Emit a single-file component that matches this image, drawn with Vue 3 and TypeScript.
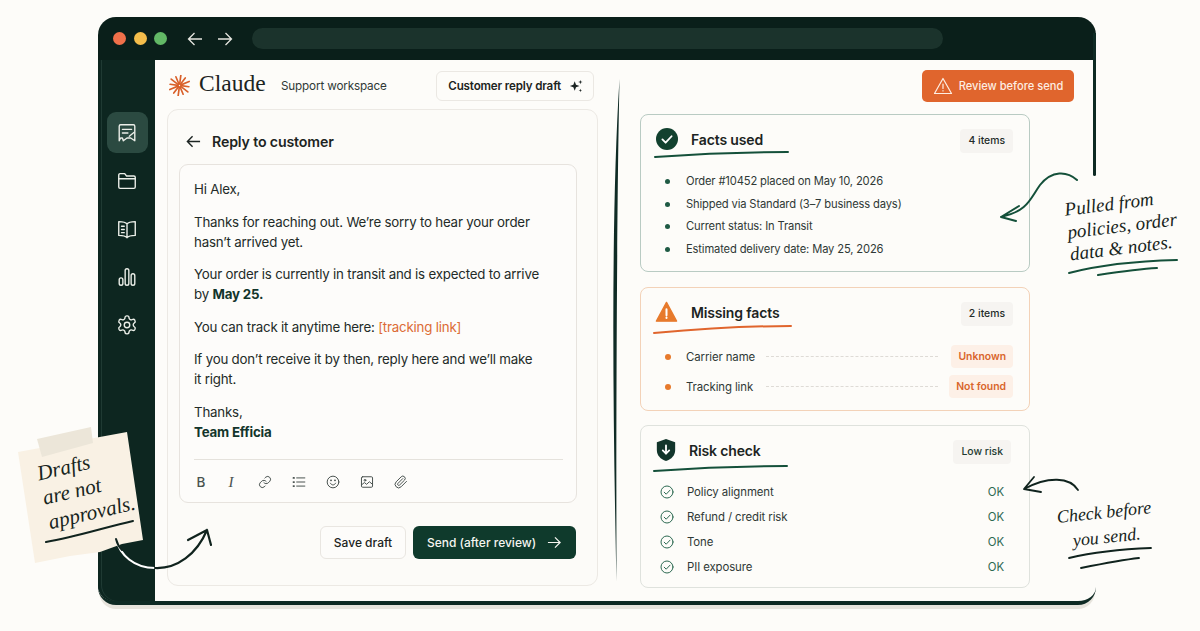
<script setup lang="ts">
const rays = Array.from({ length: 12 }, (_, i) => {
  const a = (i * Math.PI) / 6 + 0.13
  const r = i % 2 ? 10 : 9
  return {
    x1: 10 + Math.cos(a) * 1.5,
    y1: 10 + Math.sin(a) * 1.5,
    x2: 10 + Math.cos(a) * r,
    y2: 10 + Math.sin(a) * r,
  }
})

const facts = [
  'Order #10452 placed on May 10, 2026',
  'Shipped via Standard (3–7 business days)',
  'Current status: In Transit',
  'Estimated delivery date: May 25, 2026',
]

const missing = [
  { label: 'Carrier name', status: 'Unknown' },
  { label: 'Tracking link', status: 'Not found' },
]

const risks = ['Policy alignment', 'Refund / credit risk', 'Tone', 'PII exposure']
</script>

<template>
  <div class="stage">
    <div class="window">
      <header class="titlebar">
        <span class="dot red"></span>
        <span class="dot yellow"></span>
        <span class="dot green"></span>
        <svg class="nav-arrow first" viewBox="0 0 16 16"><path d="M15 8H1.5M7.5 2L1.5 8l6 6" /></svg>
        <svg class="nav-arrow" viewBox="0 0 16 16"><path d="M1 8h13.5M8.5 2l6 6-6 6" /></svg>
        <div class="urlbar"></div>
      </header>

      <div class="body">
        <nav class="sidebar">
          <div class="side-btn active">
            <svg viewBox="0 0 24 24">
              <path d="M3.5 4.5A1.5 1.5 0 0 1 5 3h14a1.5 1.5 0 0 1 1.5 1.5v16l-4.5-3h-4l-4 3-1-3H5l-1.5 3z" />
              <path d="M7 8h10M7 12h6M14.5 15.5l5-4" />
            </svg>
          </div>
          <div class="side-btn">
            <svg viewBox="0 0 24 24">
              <path d="M3 7V5.5A1.5 1.5 0 0 1 4.5 4h5l2 2.5h8A1.5 1.5 0 0 1 21 8v10.5a1.5 1.5 0 0 1-1.5 1.5h-15A1.5 1.5 0 0 1 3 18.5z" />
              <path d="M3 9.5h18" />
            </svg>
          </div>
          <div class="side-btn">
            <svg viewBox="0 0 24 24">
              <path d="M12 6.5C10.5 4.5 7 4 3 4v15c4 0 7.5.5 9 2.5 1.5-2 5-2.5 9-2.5V4c-4 0-7.5.5-9 2.5zM12 6.5v15" />
              <path d="M6 9h3M6 12.5h3M6 16h3" />
            </svg>
          </div>
          <div class="side-btn">
            <svg viewBox="0 0 24 24">
              <rect x="3.5" y="13" width="4" height="8" rx="2" />
              <rect x="10" y="3" width="4" height="18" rx="2" />
              <rect x="16.5" y="8.5" width="4" height="12.5" rx="2" />
            </svg>
          </div>
          <div class="side-btn">
            <svg viewBox="0 0 24 24">
              <circle cx="12" cy="12" r="3" />
              <path d="M12.2 2h-.4a2 2 0 0 0-2 2v.2a2 2 0 0 1-1 1.7l-.4.2a2 2 0 0 1-2 0l-.2-.1a2 2 0 0 0-2.7.7l-.2.4a2 2 0 0 0 .7 2.7l.2.1a2 2 0 0 1 1 1.7v.5a2 2 0 0 1-1 1.7l-.2.1a2 2 0 0 0-.7 2.7l.2.4a2 2 0 0 0 2.7.7l.2-.1a2 2 0 0 1 2 0l.4.2a2 2 0 0 1 1 1.7v.2a2 2 0 0 0 2 2h.4a2 2 0 0 0 2-2v-.2a2 2 0 0 1 1-1.7l.4-.2a2 2 0 0 1 2 0l.2.1a2 2 0 0 0 2.7-.7l.2-.4a2 2 0 0 0-.7-2.7l-.2-.1a2 2 0 0 1-1-1.7v-.5a2 2 0 0 1 1-1.7l.2-.1a2 2 0 0 0 .7-2.7l-.2-.4a2 2 0 0 0-2.7-.7l-.2.1a2 2 0 0 1-2 0l-.4-.2a2 2 0 0 1-1-1.7V4a2 2 0 0 0-2-2z" />
            </svg>
          </div>
        </nav>

        <main class="left">
          <div class="brandbar">
            <svg class="logo" viewBox="0 0 20 20">
              <line v-for="(r, i) in rays" :key="i" :x1="r.x1" :y1="r.y1" :x2="r.x2" :y2="r.y2" />
            </svg>
            <span class="brand">Claude</span>
            <span class="workspace">Support workspace</span>
            <div class="chip">
              Customer reply draft
              <svg class="spark" viewBox="0 0 16 16">
                <path d="M6.5 2.5l1.5 4 4 1.5-4 1.5-1.5 4-1.5-4-4-1.5 4-1.5zM13 1l.6 1.9 1.9.6-1.9.6L13 6l-.6-1.9-1.9-.6 1.9-.6zM13 11l.5 1.5 1.5.5-1.5.5-.5 1.500-.5-1.500L11 13l1.500-.5z" />
              </svg>
            </div>
          </div>

          <section class="reply">
            <h2 class="reply-title">
              <svg class="back" viewBox="0 0 16 16"><path d="M15 8H1.5M7 2.5L1.5 8 7 13.5" /></svg>
              Reply to customer
            </h2>

            <div class="editor">
              <div class="message">
                <p>Hi Alex,</p>
                <p>Thanks for reaching out. We’re sorry to hear your order<br />hasn’t arrived yet.</p>
                <p>Your order is currently in transit and is expected to arrive<br />by <strong>May 25.</strong></p>
                <p>You can track it anytime here: <span class="link">[tracking link]</span></p>
                <p>If you don’t receive it by then, reply here and we’ll make<br />it right.</p>
                <p>Thanks,<br /><strong>Team Efficia</strong></p>
              </div>
              <div class="toolbar">
                <span class="tool bold">B</span>
                <span class="tool italic">I</span>
                <svg class="tool" viewBox="0 0 24 24">
                  <path d="M10 13a5 5 0 0 0 7.5.5l3-3a5 5 0 0 0-7-7l-1.7 1.7" />
                  <path d="M14 11a5 5 0 0 0-7.5-.5l-3 3a5 5 0 0 0 7 7l1.7-1.7" />
                </svg>
                <svg class="tool" viewBox="0 0 24 24">
                  <path d="M8 5h14M8 12h14M8 19h14" />
                  <path class="thick" d="M2.5 5h1M2.5 12h1M2.5 19h1" />
                </svg>
                <svg class="tool" viewBox="0 0 24 24">
                  <circle cx="12" cy="12" r="10" />
                  <path d="M7.5 14c1.2 2 2.7 3 4.5 3s3.3-1 4.5-3" />
                  <path class="thick" d="M8.5 9h.2M15.3 9h.2" />
                </svg>
                <svg class="tool" viewBox="0 0 24 24">
                  <rect x="2.5" y="3" width="19" height="18" rx="2" />
                  <circle cx="8.5" cy="9" r="1.5" />
                  <path d="M2.5 17l5-4 4 3 4.5-4.5 5.5 4.5" />
                </svg>
                <svg class="tool" viewBox="0 0 24 24">
                  <path d="M21.4 11l-9.2 9.2a6 6 0 0 1-8.500-8.500l8.600-8.600A4 4 0 1 1 18 8.800l-8.600 8.600a2 2 0 0 1-2.800-2.800l8.500-8.500" />
                </svg>
              </div>
            </div>

            <div class="actions">
              <button class="btn-ghost">Save draft</button>
              <button class="btn-send">
                Send (after review)
                <svg viewBox="0 0 16 16"><path d="M1 8h13M8.5 2.5L14 8l-5.5 5.5" /></svg>
              </button>
            </div>
          </section>
        </main>

        <aside class="right">
          <button class="btn-review">
            <svg viewBox="0 0 20 20">
              <path d="M10 2.5l8.5 15h-17z" />
              <path d="M10 8v4.5M10 14.5v.5" />
            </svg>
            Review before send
          </button>

          <section class="card facts">
            <div class="card-head">
              <svg class="head-icon" viewBox="0 0 24 24">
                <circle cx="12" cy="12" r="12" fill="#12412f" />
                <path d="M7 12.5l3.5 3.5L17 9" fill="none" stroke="#fff" stroke-width="2" stroke-linecap="round" stroke-linejoin="round" />
              </svg>
              <h3>Facts used</h3>
              <span class="pill">4 items</span>
            </div>
            <ul class="facts-list">
              <li v-for="fact in facts" :key="fact">{{ fact }}</li>
            </ul>
          </section>

          <section class="card missing">
            <div class="card-head">
              <svg class="head-icon warn" viewBox="0 0 24 24">
                <path d="M12 1.5L23 22H1z" fill="#e77a2c" stroke="#e77a2c" stroke-width="1.5" stroke-linejoin="round" />
                <path d="M12 9v6.5M12 18v.6" fill="none" stroke="#fff" stroke-width="2.2" stroke-linecap="round" />
              </svg>
              <h3>Missing facts</h3>
              <span class="pill">2 items</span>
            </div>
            <div class="missing-list">
              <div v-for="item in missing" :key="item.label" class="missing-row">
                <span class="orange-dot"></span>
                <span class="missing-label">{{ item.label }}</span>
                <span class="dashes"></span>
                <span class="tag">{{ item.status }}</span>
              </div>
            </div>
          </section>

          <section class="card risk">
            <div class="card-head">
              <svg class="head-icon shield" viewBox="0 0 24 24">
                <path d="M12 0l10 3.5V12c0 6-4 10-10 12C6 22 2 18 2 12V3.5z" fill="#12352b" />
                <path d="M12 7v9M8.5 12.5L12 16l3.5-3.5" fill="none" stroke="#fff" stroke-width="2" stroke-linecap="round" stroke-linejoin="round" />
              </svg>
              <h3>Risk check</h3>
              <span class="pill dark">Low risk</span>
            </div>
            <div class="risk-list">
              <div v-for="risk in risks" :key="risk" class="risk-row">
                <svg viewBox="0 0 14 14">
                  <circle cx="7" cy="7" r="6" />
                  <path d="M4.2 7.2l2 2 3.8-4" />
                </svg>
                <span class="risk-label">{{ risk }}</span>
                <span class="ok">OK</span>
              </div>
            </div>
          </section>
        </aside>
      </div>
      <div class="frame-edge"></div>
    </div>

    <!-- hand drawn marks over the window -->
    <svg class="marks" viewBox="0 0 1200 631">
      <path d="M619.5 79C617 200 616 400 616.5 582C613 420 610.5 220 619.5 79z" fill="#0f2b25" />

      <polygon points="18,452 127,432 143,540 122,544 100,552 70,556 35,563" fill="#f9f1e4" />
      <polygon points="37,439 91,427 93,443 42,457" fill="#ece6d9" />
      <path class="ink" d="M46 542c30-5 60-15 87-21" stroke-width="2" />

      <path d="M116 539c4 16 18 29 39 29" fill="none" stroke="#fff" stroke-width="2.2" stroke-linecap="round" />
      <path class="ink" d="M116 539c1 4 3 8 6 11" stroke-width="2" />
      <path class="ink" d="M155 568c22 1 42-14 52-38M188 540l19-10 4 15" stroke-width="2.2" />

      <path class="green-ink" d="M1077 180c-10-9-25-10-37 5-10 14-12 26-39 32M1019 206l-18 11 15 4" />
      <path class="ink" d="M1078 490c-8-13-30-14-54-1M1034 477l-10 12 17 3" stroke-width="1.8" />

      <path class="green-fill" d="M655 157c40-3 90-5 133-5" />
      <path class="orange-fill" d="M654 333c45-4 95-7 137-7" />
      <path class="green-fill" d="M654 471c40-3 90-5 133-5" />

      <path class="green-fill" d="M1069 273c30-8 70-12 108-13M1098 275c20-3 40-6 59-7" />
      <path class="ink" d="M1069 558c25-6 55-9 82-10M1081 568c20-4 40-8 58-10" stroke-width="1.8" />
    </svg>

    <div class="hand note-text">Drafts<br />are not<br />approvals.</div>
    <div class="hand pulled-text">Pulled from<br />policies, order<br />data &amp; notes.</div>
    <div class="hand check-text">Check before<br />you send.</div>
  </div>
</template>

<style scoped>
.stage {
  position: relative;
  width: 1200px;
  height: 631px;
  padding: 17px 104px 26px 98px;
  box-sizing: border-box;
  overflow: hidden;
  background: #fdfcf9;
  color: #1f2a27;
  font-family: Inter, "Liberation Sans", sans-serif;
}

.window {
  position: relative;
  display: flex;
  flex-direction: column;
  height: 100%;
  box-sizing: border-box;
  background: #fdfcf9;
  border-bottom: 4px solid #0e2a24;
  border-radius: 18px;
  box-shadow: 0 5px 0 -1px #e7e4dd;
}

.titlebar {
  display: flex;
  align-items: center;
  height: 43px;
  flex: none;
  padding-left: 15px;
  background: #0a1f1a;
  border-radius: 18px 18px 0 0;
}

.dot {
  width: 13px;
  height: 13px;
  border-radius: 50%;
  margin-right: 7.5px;
}
.red { background: #f0704a; }
.yellow { background: #f4bd4b; }
.green { background: #62b866; }

.nav-arrow {
  width: 16px;
  height: 16px;
  margin-left: 14px;
  fill: none;
  stroke: #e6e6e0;
  stroke-width: 1.3;
}
.nav-arrow.first { margin-left: 12px; }

.urlbar {
  width: 691px;
  height: 21px;
  margin-left: 19px;
  border-radius: 11px;
  background: #1b332c;
}

.body {
  display: flex;
  flex: 1;
  min-height: 0;
}

.sidebar {
  display: flex;
  flex-direction: column;
  align-items: center;
  gap: 7px;
  flex: none;
  width: 57px;
  box-sizing: border-box;
  padding: 52px 0 0 1px;
  background: #0d2620;
  border-radius: 0 0 0 16px;
  box-shadow: inset 3px 0 0 #0d2620, inset 4px 0 0 #1f3a33;
}

.side-btn {
  display: flex;
  align-items: center;
  justify-content: center;
  width: 41px;
  height: 41px;
  border-radius: 9px;
}
.side-btn.active { background: #2b4a41; }
.side-btn svg {
  width: 22px;
  height: 22px;
  fill: none;
  stroke: #ecefe9;
  stroke-width: 1.5;
  stroke-linejoin: round;
  stroke-linecap: round;
}

.left {
  flex: none;
  width: 462px;
  box-sizing: border-box;
  padding: 11px 0 0 12px;
}

.brandbar {
  display: flex;
  align-items: center;
  width: 431px;
  height: 30px;
}

.logo {
  width: 21px;
  height: 21px;
  margin-left: 2px;
  margin-bottom: 2px;
  stroke: #d9602a;
  stroke-width: 1.6;
  stroke-linecap: round;
}

.brand {
  width: 82px;
  margin-left: 9px;
  margin-bottom: 5px;
  font-family: "Liberation Serif", serif;
  font-size: 23.5px;
  color: #1c2422;
}

.workspace {
  font-size: 11.7px;
  letter-spacing: -0.15px;
  color: #2f3936;
}

.chip {
  display: flex;
  align-items: center;
  gap: 8px;
  margin-left: auto;
  margin-right: 4px;
  height: 30px;
  padding: 0 10px 0 11px;
  box-sizing: border-box;
  border: 1px solid #ebe8e3;
  border-radius: 6px;
  font-size: 11.6px;
  letter-spacing: -0.15px;
  font-weight: 600;
  color: #1c2422;
}

.spark {
  width: 14px;
  height: 14px;
  fill: #1c2422;
}

.reply {
  height: 477px;
  margin-top: 8px;
  padding: 0 20px 0 11px;
  box-sizing: border-box;
  width: 431px;
  border: 1px solid #ece9e4;
  border-radius: 11px;
  background: #fcfbf8;
}

.reply-title {
  display: flex;
  align-items: center;
  gap: 11px;
  height: 54px;
  box-sizing: border-box;
  margin: 0;
  padding: 8px 0 0 7px;
  font-size: 14.2px;
  letter-spacing: -0.15px;
  font-weight: 600;
  color: #1c2422;
}

.back {
  width: 15px;
  height: 15px;
  fill: none;
  stroke: #1c2422;
  stroke-width: 1.5;
}

.editor {
  height: 339px;
  box-sizing: border-box;
  padding: 14px 13px 0 14px;
  border: 1px solid #e7e3de;
  border-radius: 9px;
  background: #fdfcfa;
}

.message {
  height: 280px;
  font-size: 13.3px;
  letter-spacing: -0.2px;
  line-height: 20px;
  color: #232b28;
}
.message p { margin: 0 0 12.5px; }
.message strong { font-weight: 700; color: #12352b; }
.link { color: #dc6b35; }

.toolbar {
  display: flex;
  align-items: center;
  gap: 20px;
  height: 44px;
  border-top: 1px solid #e5e2dc;
}

.tool {
  width: 14px;
  height: 14px;
  flex: none;
  fill: none;
  stroke: #49524f;
  stroke-width: 1.7;
  stroke-linecap: round;
  stroke-linejoin: round;
  font-size: 13.5px;
  line-height: 14px;
  text-align: center;
  color: #49524f;
}
.tool .thick { stroke-width: 3; }
.bold { font-weight: 500; margin-right: -4px; }
.italic { font-family: "Liberation Serif", serif; font-style: italic; font-size: 15px; }

.actions {
  display: flex;
  justify-content: flex-end;
  gap: 7px;
  margin-top: 23px;
  padding-right: 1px;
}

button {
  font-family: inherit;
  font-size: 12px;
  font-weight: 500;
}

.btn-ghost {
  width: 86px;
  height: 33px;
  border: 1px solid #e9e6e1;
  border-radius: 6px;
  background: #fdfcfa;
  color: #1c2422;
}

.btn-send {
  display: flex;
  align-items: center;
  justify-content: center;
  gap: 11px;
  width: 163px;
  height: 33px;
  border: none;
  border-radius: 6px;
  background: #0f3a2c;
  color: #f5f5f0;
}
.btn-send svg {
  width: 15px;
  height: 15px;
  fill: none;
  stroke: #f5f5f0;
  stroke-width: 1.3;
}

.right {
  flex: 1;
  display: flex;
  flex-direction: column;
  padding: 10px 0 0 23px;
}

.btn-review {
  display: flex;
  align-items: center;
  justify-content: center;
  gap: 6px;
  align-self: flex-end;
  width: 152px;
  height: 32px;
  margin-right: 22px;
  border: none;
  border-radius: 5px;
  background: #e0652d;
  color: #fdeee3;
  font-size: 11.1px;
}
.btn-review svg {
  width: 20px;
  height: 20px;
  fill: none;
  stroke: #fdeee3;
  stroke-width: 1.2;
  stroke-linejoin: round;
  stroke-linecap: round;
}

.card {
  width: 390px;
  box-sizing: border-box;
  border: 1px solid #dfe2dd;
  border-radius: 8px;
  background: #fdfcf9;
  padding: 14px 16px 0 15px;
}

.facts {
  height: 158px;
  margin-top: 12px;
  border-color: #b9cbc3;
}
.missing {
  height: 124px;
  margin-top: 15px;
  border-color: #f3d2b8;
}
.risk {
  height: 163px;
  margin-top: 14px;
  padding-right: 18px;
}

.card-head {
  display: flex;
  align-items: center;
  height: 24px;
}
.card-head h3 {
  margin: 0 0 4px 13px;
  font-size: 14px;
  letter-spacing: -0.15px;
  font-weight: 600;
  color: #1c2422;
}
.head-icon {
  width: 22px;
  height: 22px;
  margin-bottom: 4px;
  flex: none;
}
.head-icon.warn { width: 23px; margin-left: -1px; }
.head-icon.shield { margin-left: -1px; margin-right: -1px; }

.pill {
  margin-left: auto;
  padding: 0 8px;
  height: 24px;
  line-height: 24px;
  border-radius: 4px;
  background: #f6f4f1;
  font-size: 10.4px;
  font-weight: 500;
  color: #232b28;
}
.pill.dark { color: #1d3a30; }

.facts-list {
  list-style: none;
  margin: 17px 0 0;
  padding: 0 0 0 30px;
  font-size: 11.2px;
  letter-spacing: -0.15px;
  line-height: 22.6px;
  color: #2f3936;
}
.facts-list li {
  position: relative;
}
.facts-list li::before {
  content: "";
  position: absolute;
  left: -21px;
  top: 9px;
  width: 5px;
  height: 5px;
  border-radius: 50%;
  background: #1f5a44;
}

.missing-list {
  display: flex;
  flex-direction: column;
  gap: 7px;
  margin-top: 19px;
}
.missing-row {
  display: flex;
  align-items: center;
  height: 23px;
}
.orange-dot {
  width: 6px;
  height: 6px;
  margin-left: 9px;
  border-radius: 50%;
  background: #e77a2c;
}
.missing-label {
  width: 80px;
  margin-left: 15px;
  font-size: 11.4px;
  letter-spacing: -0.1px;
  color: #2f3936;
}
.dashes {
  width: 172px;
  border-top: 1px dashed #dedbd6;
}
.tag {
  margin-left: auto;
  padding: 0 7px;
  height: 23px;
  line-height: 23px;
  border-radius: 4px;
  background: #fdf0e7;
  color: #d9652b;
  font-size: 10.4px;
  font-weight: 600;
}

.risk-list {
  display: flex;
  flex-direction: column;
  margin-top: 15px;
}
.risk-row {
  display: flex;
  align-items: center;
  height: 25px;
  padding-left: 4px;
  font-size: 11.4px;
  letter-spacing: -0.1px;
  color: #2f3936;
}
.risk-row svg {
  width: 14px;
  height: 14px;
  fill: none;
  stroke: #2d6a52;
  stroke-width: 1;
  stroke-linecap: round;
  stroke-linejoin: round;
}
.risk-label { margin-left: 13px; }
.ok {
  margin-left: auto;
  margin-right: 7px;
  color: #2d6a52;
}

.frame-edge {
  position: absolute;
  top: 16px;
  right: 0;
  width: 3px;
  height: 143px;
  border-radius: 0 0 2px 2px;
  background: #0e2a24;
}

.marks {
  position: absolute;
  left: 0;
  top: 0;
  width: 1200px;
  height: 631px;
  pointer-events: none;
}
.ink {
  fill: none;
  stroke: #10231e;
  stroke-linecap: round;
  stroke-linejoin: round;
}
.green-ink {
  fill: none;
  stroke: #14503a;
  stroke-width: 2;
  stroke-linecap: round;
  stroke-linejoin: round;
}
.green-fill {
  fill: none;
  stroke: #14503a;
  stroke-width: 2;
  stroke-linecap: round;
}
.orange-fill {
  fill: none;
  stroke: #e0652d;
  stroke-width: 2;
  stroke-linecap: round;
}

.hand {
  position: absolute;
  font-family: "Liberation Serif", serif;
  font-style: italic;
  color: #172420;
  white-space: nowrap;
}

.note-text {
  left: 42px;
  top: 451px;
  font-size: 21px;
  line-height: 25px;
  transform: rotate(-13deg);
}

.pulled-text {
  left: 1067px;
  top: 192px;
  font-size: 19px;
  line-height: 22.5px;
  transform: rotate(-7deg);
}

.check-text {
  left: 1058px;
  top: 500px;
  font-size: 18px;
  line-height: 25px;
  text-align: center;
  transform: rotate(-6deg);
}
</style>

<style>
html,
body {
  background: #fdfcf9;
}
</style>
